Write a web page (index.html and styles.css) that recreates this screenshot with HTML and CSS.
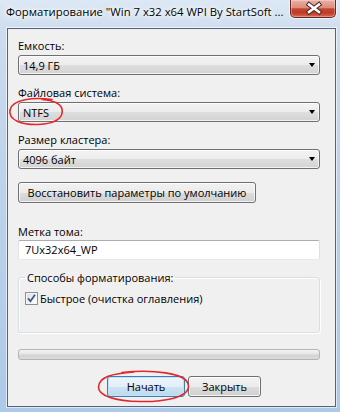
FILE: index.html
```html
<!DOCTYPE html>
<html lang="ru">
<head>
    <meta charset="UTF-8">
    <title>Форматирование</title>
    <link rel="stylesheet" href="styles.css">
</head>
<body>
    <div class="window">
        <div class="titlebar">
            <span class="title">Форматирование "Win 7 x32 x64 WPI By StartSoft ...</span>
            <div class="close-btn">
                <svg width="46" height="17" viewBox="0 0 46 17">
                    <path d="M18 4.5 L28 12 M28 4.5 L18 12" stroke="#4a2a26" stroke-width="4.6" stroke-linecap="square"/>
                    <path d="M18 4.5 L28 12 M28 4.5 L18 12" stroke="#ffffff" stroke-width="2.6" stroke-linecap="square"/>
                </svg>
            </div>
        </div>

        <div class="client">
            <div class="label first">Емкость:</div>
            <div class="combo"><span>14,9 ГБ</span><span class="arrow"></span></div>

            <div class="label">Файловая система:</div>
            <div class="combo"><span>NTFS</span><span class="arrow"></span></div>

            <div class="label">Размер кластера:</div>
            <div class="combo"><span>4096 байт</span><span class="arrow"></span></div>

            <div class="btn restore-btn">Восстановить параметры по умолчанию</div>

            <div class="label volume-label">Метка тома:</div>
            <div class="textbox">7Ux32x64_WP</div>

            <fieldset class="group">
                <legend>Способы форматирования:</legend>
                <div class="check-row">
                    <span class="check">
                        <svg width="11" height="11" viewBox="0 0 11 11">
                            <path d="M2 5.2 L4.4 8.2 L9 1.8" fill="none" stroke="#3d5694" stroke-width="1.8"/>
                        </svg>
                    </span>
                    <span>Быстрое (очистка оглавления)</span>
                </div>
            </fieldset>

            <div class="progress"></div>

            <div class="actions">
                <div class="btn default-btn">Начать</div>
                <div class="btn close-dialog-btn">Закрыть</div>
            </div>
        </div>

        <!-- пометки красным поверх окна -->
        <svg class="marks" width="340" height="412" viewBox="0 0 340 412">
            <path d="M52 99.5 C34 97, 12 99, 10 110 C8 120, 22 125, 38 124.5 C55 124, 64 118, 62 109 C60.5 103, 54 100.5, 42 99.5" />
            <path d="M122 372.5 C150 369.5, 188 372, 188.5 386 C189 398, 162 402, 140 401.5 C116 401, 98 396, 98.5 387 C99 377, 112 373.5, 134 372" />
        </svg>
    </div>
</body>
</html>
```

FILE: styles.css
```css
* {
    margin: 0;
    padding: 0;
    box-sizing: border-box;
}

body {
    font-family: "Open Sans", "Noto Sans", sans-serif;
    font-size: 11px;
    color: #000;
    background: #b9cfe8;
}

.window {
    position: relative;
    width: 340px;
    height: 412px;
    display: flex;
    flex-direction: column;
    background: linear-gradient(180deg, #dce8f5 0%, #cddcee 8%, #bed3ea 40%, #adc9e8 100%);
    overflow: hidden;
}

.titlebar {
    height: 28px;
    display: flex;
    justify-content: space-between;
    align-items: flex-start;
    padding: 0 4px 0 6px;
}

.title {
    font-size: 11.3px;
    line-height: 23px;
    white-space: nowrap;
    text-shadow: 0 0 6px #fff, 0 0 10px #fff, 0 0 3px #fff;
}

.close-btn {
    width: 46px;
    height: 18px;
    border: 1px solid #6a2a22;
    border-top: none;
    border-radius: 0 0 5px 5px;
    background: linear-gradient(180deg, #eab0a4 0%, #dc8c7e 45%, #c4452f 52%, #c23a28 75%, #d66a52 100%);
    box-shadow: 0 0 0 1px rgba(255, 255, 255, 0.55), inset 0 0 0 1px rgba(255, 255, 255, 0.3);
}

.close-btn svg {
    display: block;
}

.client {
    flex: 1;
    margin: 0 4px 5px 7px;
    padding: 0 15px 0 10px;
    background: #f0f0f0;
    border: 1px solid #53657a;
    box-shadow: 0 0 0 1px rgba(255, 255, 255, 0.6);
    display: flex;
    flex-direction: column;
}

.label {
    line-height: 15px;
    margin-top: 10px;
    margin-bottom: 2px;
}

.label.first {
    margin-top: 9px;
}

.combo {
    height: 20px;
    border: 1px solid #707070;
    border-radius: 3px;
    background: linear-gradient(180deg, #f3f3f3 0%, #ececec 50%, #dedede 51%, #d3d3d3 100%);
    box-shadow: inset 0 0 0 1px rgba(255, 255, 255, 0.7);
    display: flex;
    align-items: center;
    justify-content: space-between;
    padding: 0 3px 0 4px;
    line-height: 15px;
}

.arrow {
    width: 0;
    height: 0;
    border-left: 3.5px solid transparent;
    border-right: 3.5px solid transparent;
    border-top: 4px solid #000;
    margin-right: 1px;
}

.btn {
    height: 21px;
    border: 1px solid #707070;
    border-radius: 3px;
    background: linear-gradient(180deg, #f2f2f2 0%, #ebebeb 50%, #dddddd 51%, #cfcfcf 100%);
    box-shadow: inset 0 0 0 1px rgba(255, 255, 255, 0.75);
    display: flex;
    align-items: center;
    justify-content: center;
    line-height: 15px;
    white-space: nowrap;
}

.restore-btn {
    width: 238px;
    margin-top: 13px;
}

.volume-label {
    margin-top: 21px;
    margin-bottom: 1px;
}

.textbox {
    height: 20px;
    background: #fff;
    border: 1px solid;
    border-color: #abadb3 #dbdfe6 #e3e9ef #e2e3ea;
    border-radius: 2px;
    padding-left: 6px;
    line-height: 18px;
}

.group {
    margin-top: 10px;
    height: 63px;
    border: 1px solid #d5dfe5;
    border-radius: 3px;
    box-shadow: inset 1px 1px 0 #fff, 1px 1px 0 #fff;
    padding: 6px 6px 0 6px;
}

.group legend {
    padding: 0 2px;
    line-height: 15px;
}

.check-row {
    display: flex;
    align-items: center;
    gap: 2px;
    line-height: 15px;
}

.check {
    width: 13px;
    height: 13px;
    border: 1px solid #8e8f8f;
    background: linear-gradient(135deg, #d8d8d8 0%, #f4f4f4 60%, #ffffff 100%);
    box-shadow: inset 0 0 0 1px #f6f6f6;
    display: flex;
    align-items: center;
    justify-content: center;
}

.check svg {
    display: block;
}

.progress {
    margin-top: 16px;
    height: 11px;
    border: 1px solid #b4b4b4;
    border-radius: 3px;
    background: linear-gradient(180deg, #f4f4f4 0%, #e4e4e4 45%, #d3d3d3 60%, #dcdcdc 100%);
}

.actions {
    margin-top: 16px;
    display: flex;
    gap: 3px;
    padding-left: 89px;
}

.default-btn {
    width: 78px;
    border-color: #3c7fb1;
    background: linear-gradient(180deg, #eef5fa 0%, #e3eef7 50%, #cfe4f3 51%, #bcd9ee 100%);
    box-shadow: inset 0 0 0 1px #bfe3f8;
}

.close-dialog-btn {
    width: 73px;
}

.marks {
    position: absolute;
    left: 0;
    top: 0;
    pointer-events: none;
}

.marks path {
    fill: none;
    stroke: #e4262c;
    stroke-width: 1.6;
    stroke-linecap: round;
}
```
